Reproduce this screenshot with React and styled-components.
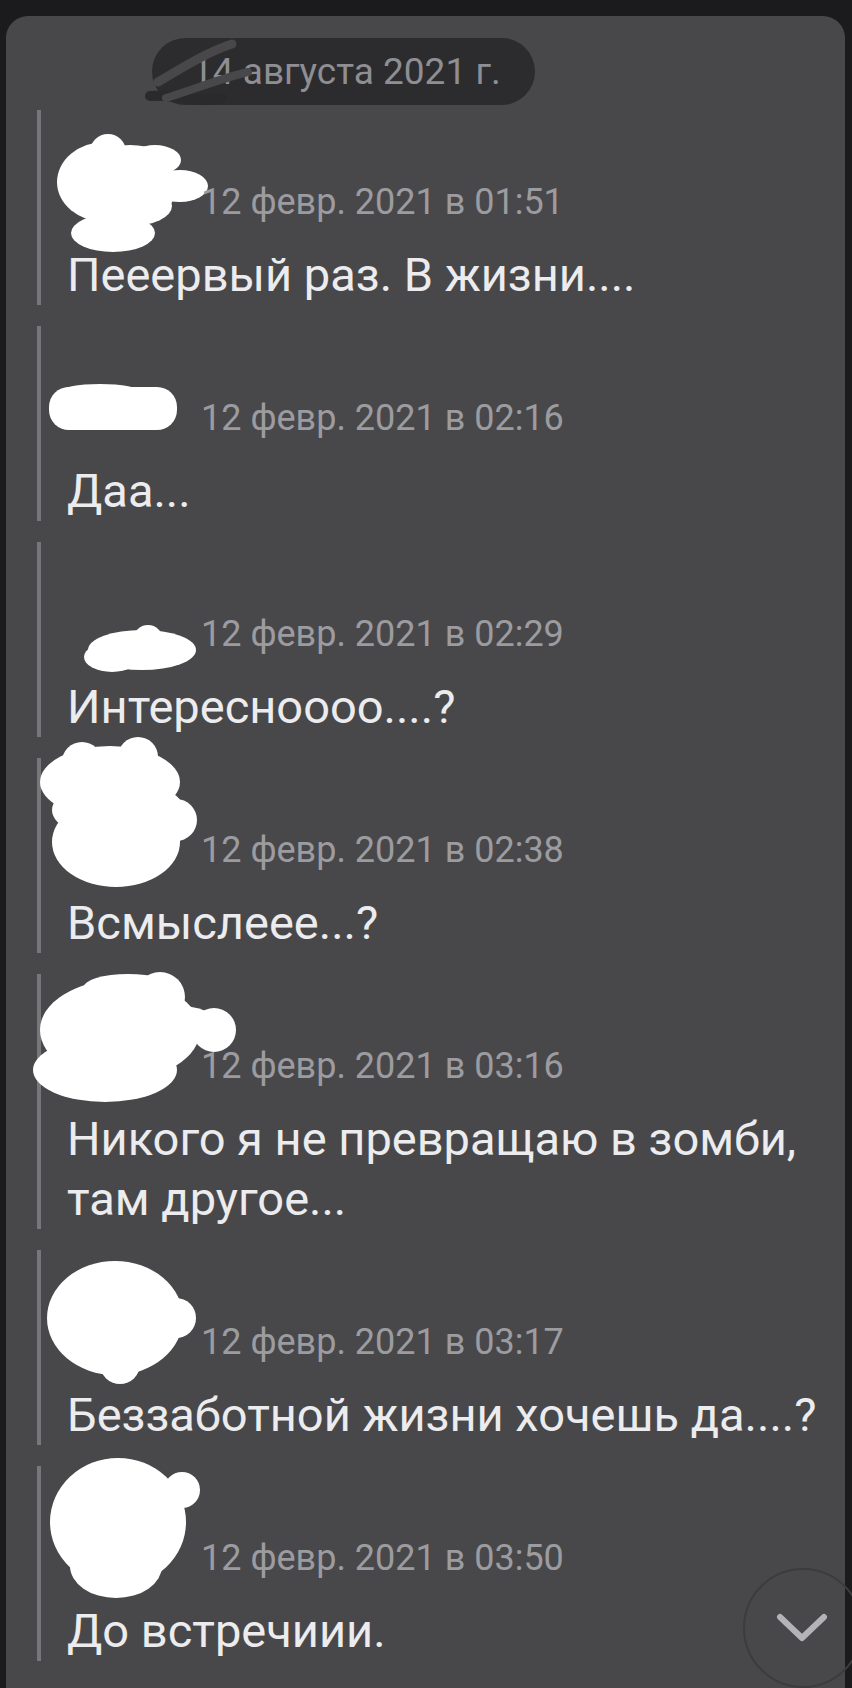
import React from 'react'
import styled, { createGlobalStyle } from 'styled-components';

const GlobalStyle = createGlobalStyle`
  html, body {
    margin: 0;
    padding: 0;
    background: #1b1b1d;
  }
  body {
    font-family: Roboto, "Noto Sans", "Liberation Sans", sans-serif;
  }
`;

// закрашенные аватарки (координаты страницы)
const messages = [
  {
    top: 177,
    time: '12 февр. 2021 в 01:51',
    text: ['Пееервый раз. В жизни....'],
    blob: [
      ['e', 105, 182, 48, 40], ['c', 108, 152, 18], ['e', 155, 160, 26, 15],
      ['e', 180, 186, 28, 16], ['e', 130, 206, 42, 20], ['e', 113, 233, 42, 19],
      ['e', 125, 192, 50, 30], ['e', 130, 165, 40, 20],
    ],
  },
  {
    top: 393,
    time: '12 февр. 2021 в 02:16',
    text: ['Даа...'],
    blob: [['r', 49, 387, 128, 43, 20], ['e', 100, 392, 40, 8]],
  },
  {
    top: 609,
    time: '12 февр. 2021 в 02:29',
    text: ['Интересноооо....?'],
    blob: [['e', 142, 650, 54, 20], ['c', 148, 640, 15], ['e', 112, 657, 28, 15]],
  },
  {
    top: 825,
    time: '12 февр. 2021 в 02:38',
    text: ['Всмыслеее...?'],
    blob: [
      ['e', 110, 782, 70, 36], ['e', 116, 842, 64, 45], ['c', 176, 820, 21],
      ['c', 82, 762, 20], ['c', 138, 757, 20], ['e', 118, 810, 66, 30],
    ],
  },
  {
    top: 1041,
    time: '12 февр. 2021 в 03:16',
    text: ['Никого я не превращаю в зомби,', 'там другое...'],
    blob: [
      ['e', 120, 1030, 80, 50], ['e', 105, 1070, 72, 32], ['c', 214, 1030, 22],
      ['c', 160, 997, 25], ['e', 128, 988, 45, 14], ['e', 170, 1025, 50, 20],
    ],
  },
  {
    top: 1317,
    time: '12 февр. 2021 в 03:17',
    text: ['Беззаботной жизни хочешь да....?'],
    blob: [['e', 115, 1318, 68, 57], ['c', 176, 1318, 20], ['c', 120, 1364, 20]],
  },
  {
    top: 1533,
    time: '12 февр. 2021 в 03:50',
    text: ['До встречиии.'],
    blob: [['e', 118, 1522, 68, 64], ['e', 116, 1566, 46, 32], ['c', 182, 1490, 18]],
  },
];

const BlobShape = ({ s }) => {
  if (s[0] === 'c') return <circle cx={s[1]} cy={s[2]} r={s[3]} />;
  if (s[0] === 'r') return <rect x={s[1]} y={s[2]} width={s[3]} height={s[4]} rx={s[5]} />;
  return <ellipse cx={s[1]} cy={s[2]} rx={s[3]} ry={s[4]} />;
};

const Message = ({ item }) => (
  <StMessage>
    <StHeader>
      <StScribble viewBox={`67 ${item.top} 134 50`} width="134" height="50">
        <g fill="#ffffff">
          {item.blob.map((s, i) => <BlobShape key={i} s={s} />)}
        </g>
      </StScribble>
      <StTime>{item.time}</StTime>
    </StHeader>
    <StText>
      {item.text.map((line, i) => <div key={i}>{line}</div>)}
    </StText>
  </StMessage>
);

const App = () => {
  return (
    <StPage>
      <GlobalStyle />
      <StCard>
        <StDateRow>
          <StPill>
            <StPillScribble viewBox="0 0 100 67" width="100" height="67">
              <path d="M-2 58 C 20 56, 50 66, 70 60" stroke="#2a2a2c" strokeWidth="10" fill="none" strokeLinecap="round" />
              <path d="M6 44 C 30 30, 55 14, 80 6" stroke="#48484b" strokeWidth="9" fill="none" strokeLinecap="round" />
              <path d="M14 60 C 40 52, 70 40, 96 34" stroke="#48484b" strokeWidth="8" fill="none" strokeLinecap="round" />
            </StPillScribble>
            14 августа 2021 г.
          </StPill>
        </StDateRow>
        <StList>
          {messages.map((m) => <Message key={m.top} item={m} />)}
        </StList>
      </StCard>
      <StScrollButton>
        <svg width="52" height="30" viewBox="0 0 52 30">
          <path d="M4 4 L26 25 L48 4" stroke="#b4b4b8" strokeWidth="6" fill="none" strokeLinecap="round" strokeLinejoin="round" />
        </svg>
      </StScrollButton>
    </StPage>
  )
}

const StPage = styled.div`
  position: relative;
  width: 852px;
  height: 1688px;
  overflow: hidden;
  padding: 16px 7px 0 6px;
  box-sizing: border-box;
  background: #1b1b1d;
`;

const StCard = styled.div`
  height: 1672px;
  background: #48484b;
  border-radius: 22px 22px 0 0;
  padding-top: 22px;
  box-sizing: border-box;
`;

const StDateRow = styled.div`
  display: flex;
  padding-left: 146px;
`;

const StPill = styled.div`
  position: relative;
  display: flex;
  align-items: center;
  height: 67px;
  padding: 0 34px 0 40px;
  border-radius: 34px;
  background: #2c2c2e;
  color: #8e8e93;
  font-size: 37px;
  white-space: nowrap;
`;

const StPillScribble = styled.svg`
  position: absolute;
  left: 0;
  top: 0;
  overflow: visible;
`;

const StList = styled.div`
  display: flex;
  flex-direction: column;
  gap: 21px;
  margin-top: 5px;
`;

const StMessage = styled.div`
  margin-left: 31px;
  padding: 67px 0 0 26px;
  border-left: 4px solid #77777b;
`;

const StHeader = styled.div`
  display: flex;
  align-items: center;
  height: 50px;
`;

const StScribble = styled.svg`
  flex: 0 0 134px;
  overflow: visible;
`;

const StTime = styled.div`
  color: #9c9ca0;
  font-size: 36px;
  line-height: 50px;
  white-space: nowrap;
`;

const StText = styled.div`
  margin-top: 18px;
  color: #ececee;
  font-size: 47px;
  line-height: 60px;
  white-space: nowrap;
`;

const StScrollButton = styled.div`
  position: absolute;
  left: 743px;
  top: 1568px;
  width: 120px;
  height: 120px;
  border-radius: 50%;
  border: 2px solid #3c3c3f;
  box-sizing: border-box;
  display: flex;
  align-items: center;
  justify-content: center;
  padding-right: 2px;
`;

export default App
